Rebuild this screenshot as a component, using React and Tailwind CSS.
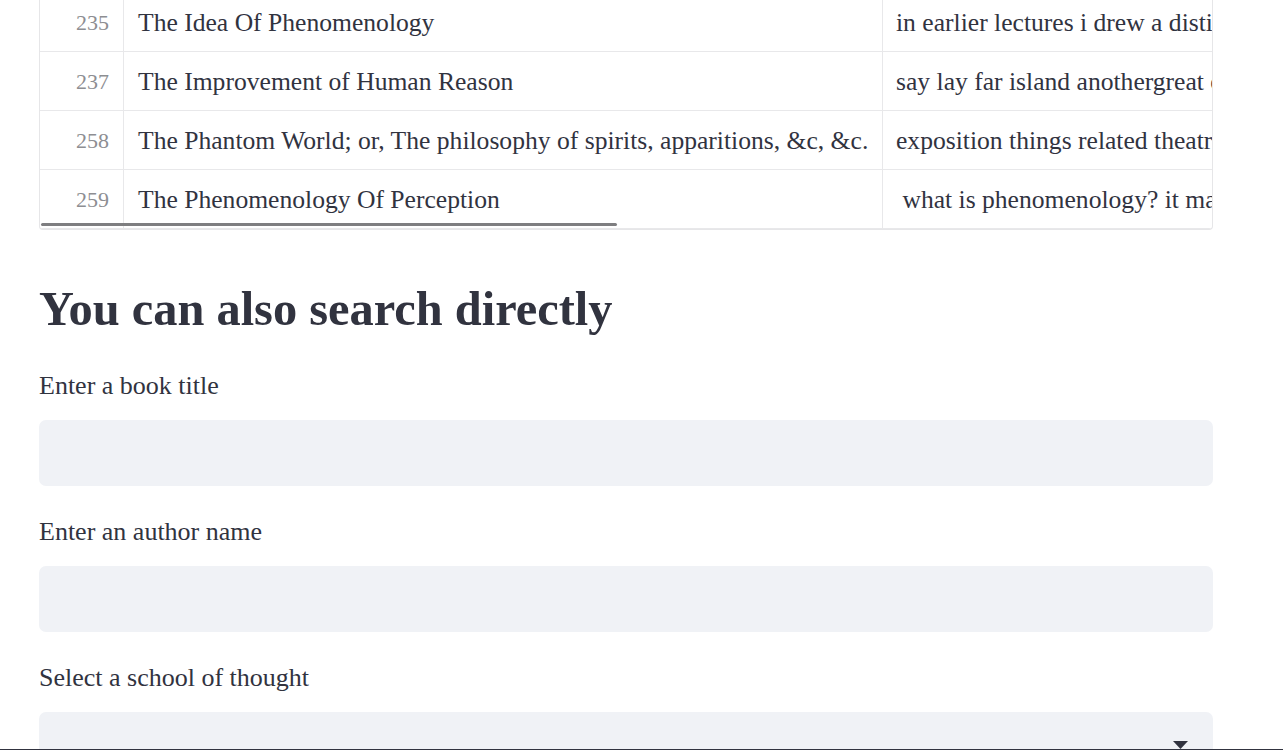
import React from "react";

const rows = [
  { id: "235", title: "The Idea Of Phenomenology", text: "in earlier lectures i drew a distinction between" },
  { id: "237", title: "The Improvement of Human Reason", text: "say lay far island anothergreat ocean" },
  { id: "258", title: "The Phantom World; or, The philosophy of spirits, apparitions, &c, &c.", text: "exposition things related theatre" },
  { id: "259", title: "The Phenomenology Of Perception", text: "\u00a0what is phenomenology? it may seem strange" },
];

export default function App() {
  return (
    <div
      className="h-[750px] w-[1283px] overflow-hidden bg-white flex flex-col text-[#31333f]"
      style={{ fontFamily: '"Liberation Serif", "DejaVu Serif", serif' }}
    >
      <div className="flex-1 overflow-hidden">
        <div className="ml-[39px] w-[1174px]">
          {/* table */}
          <div className="relative mt-[-7px] border border-t-0 border-[#e6e6e8] rounded-b-[4px] overflow-hidden">
            {rows.map((r) => (
              <div key={r.id} className="flex h-[58px] border-b border-[#e8e8ea] box-content">
                <div className="w-[84px] shrink-0 flex items-center justify-end pr-[14px] pt-[2px] border-r border-[#e8e8ea] text-[#8d8e92] text-[22px] leading-none">
                  {r.id}
                </div>
                <div className="w-[759px] shrink-0 flex items-center pl-[14px] pt-[2px] border-r border-[#e8e8ea] text-[25.6px] leading-none whitespace-nowrap">
                  {r.title}
                </div>
                <div className="flex-1 min-w-0 flex items-center pl-[13px] pt-[2px] text-[25.6px] leading-none whitespace-nowrap overflow-hidden">
                  {r.text}
                </div>
              </div>
            ))}
            <div className="absolute left-[1px] bottom-[3px] w-[576px] h-[3px] rounded-full bg-[#7e7e80]" />
          </div>

          {/* heading */}
          <h2 className="mt-[55px] h-[48px] text-[48.4px] leading-[48px] font-bold whitespace-nowrap">
            You can also search directly
          </h2>

          {/* title field */}
          <div className="mt-[40px] h-[25px] text-[26px] leading-[25px] whitespace-nowrap">Enter a book title</div>
          <div className="mt-[22px] h-[66px] rounded-[7px] bg-[#f0f2f6]" />

          {/* author field */}
          <div className="mt-[33px] h-[25px] text-[26px] leading-[25px] whitespace-nowrap">Enter an author name</div>
          <div className="mt-[22px] h-[66px] rounded-[7px] bg-[#f0f2f6]" />

          {/* school select */}
          <div className="mt-[33px] h-[25px] text-[26px] leading-[25px] whitespace-nowrap">Select a school of thought</div>
          <div className="mt-[22px] h-[66px] rounded-[7px] bg-[#f0f2f6] flex items-center justify-end pr-[25px]">
            <svg width="15" height="8" viewBox="0 0 15 8">
              <path d="M0 0 H15 L7.5 8 Z" fill="#31333f" />
            </svg>
          </div>
        </div>
      </div>
      <div className="h-px w-full bg-[#31333f] shrink-0" />
    </div>
  );
}
